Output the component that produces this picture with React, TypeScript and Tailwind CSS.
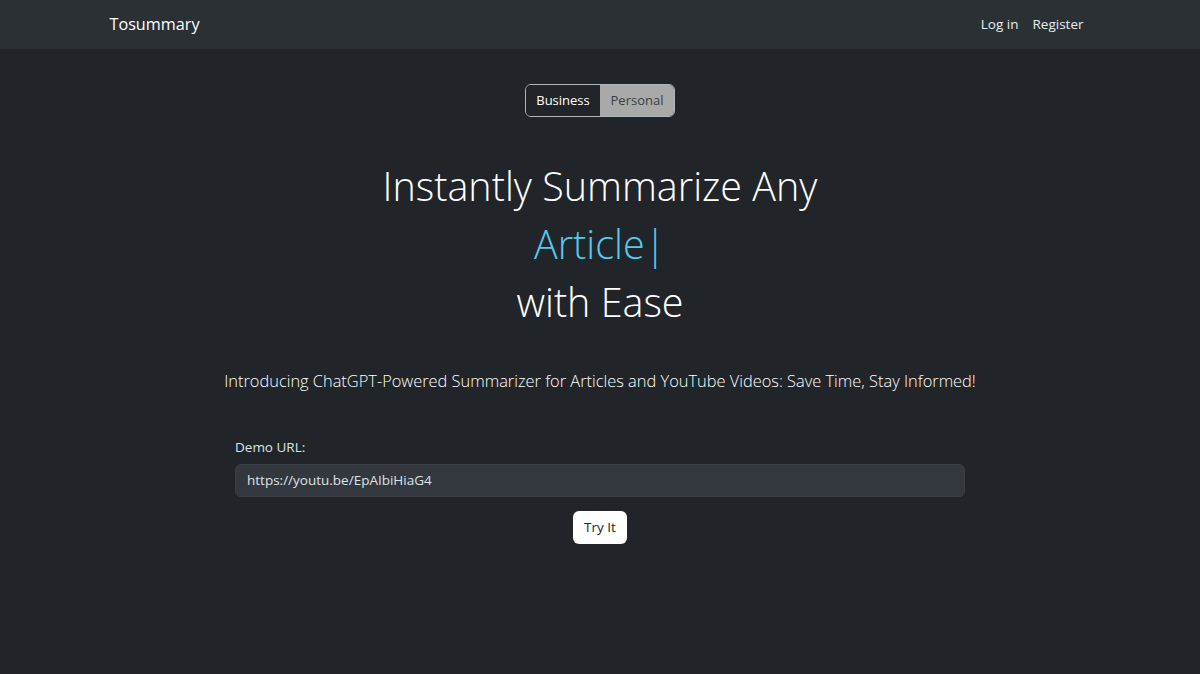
import React from 'react';

const font = { fontFamily: '"Open Sans", "Noto Sans", sans-serif' };

export default function App() {
  return (
    <div className="min-h-[674px] bg-[#212529] text-[#dee2e6]" style={font}>
      <nav className="h-[49px] bg-[#2b3035]">
        <div className="mx-auto flex h-full w-[981px] items-center justify-between">
          <a className="text-[16.2px] text-white">Tosummary</a>
          <div className="flex items-center text-[13.5px] text-[#e9ecef]">
            <a className="px-[7px]">Log in</a>
            <a className="px-[7px]">Register</a>
          </div>
        </div>
      </nav>

      <main className="flex flex-col items-center">
        <div className="mt-[35px] flex h-[33px] overflow-hidden rounded-md border border-[#adb5bd] text-[13px]">
          <button className="w-[74px] bg-[#212529] text-white">Business</button>
          <button className="w-[74px] bg-[#a9a9a9] text-[#3a3f44]">Personal</button>
        </div>

        <h1 className="mt-[40px] text-center text-[39.5px] font-light leading-[58px] text-white">
          Instantly Summarize Any
          <br />
          <span className="text-[#55c9ec]">Article|</span>
          <br />
          with Ease
        </h1>

        <p className="mt-[38px] text-center text-[16.4px] font-light text-white">
          Introducing ChatGPT-Powered Summarizer for Articles and YouTube Videos: Save Time, Stay Informed!
        </p>

        <div className="mt-[43px] w-[730px]">
          <label className="block text-[13.5px] text-[#dee2e6]">Demo URL:</label>
          <input
            className="mt-[7px] h-[33px] w-full rounded-md border border-[#3a3f45] bg-[#33373e] px-[11px] text-[13.5px] text-[#dee2e6] outline-none"
            defaultValue="https://youtu.be/EpAIbiHiaG4"
          />
        </div>

        <button className="mt-[14px] h-[33px] rounded-md bg-white px-[11px] text-[13.5px] text-[#212529]">
          Try It
        </button>
      </main>
    </div>
  );
}
